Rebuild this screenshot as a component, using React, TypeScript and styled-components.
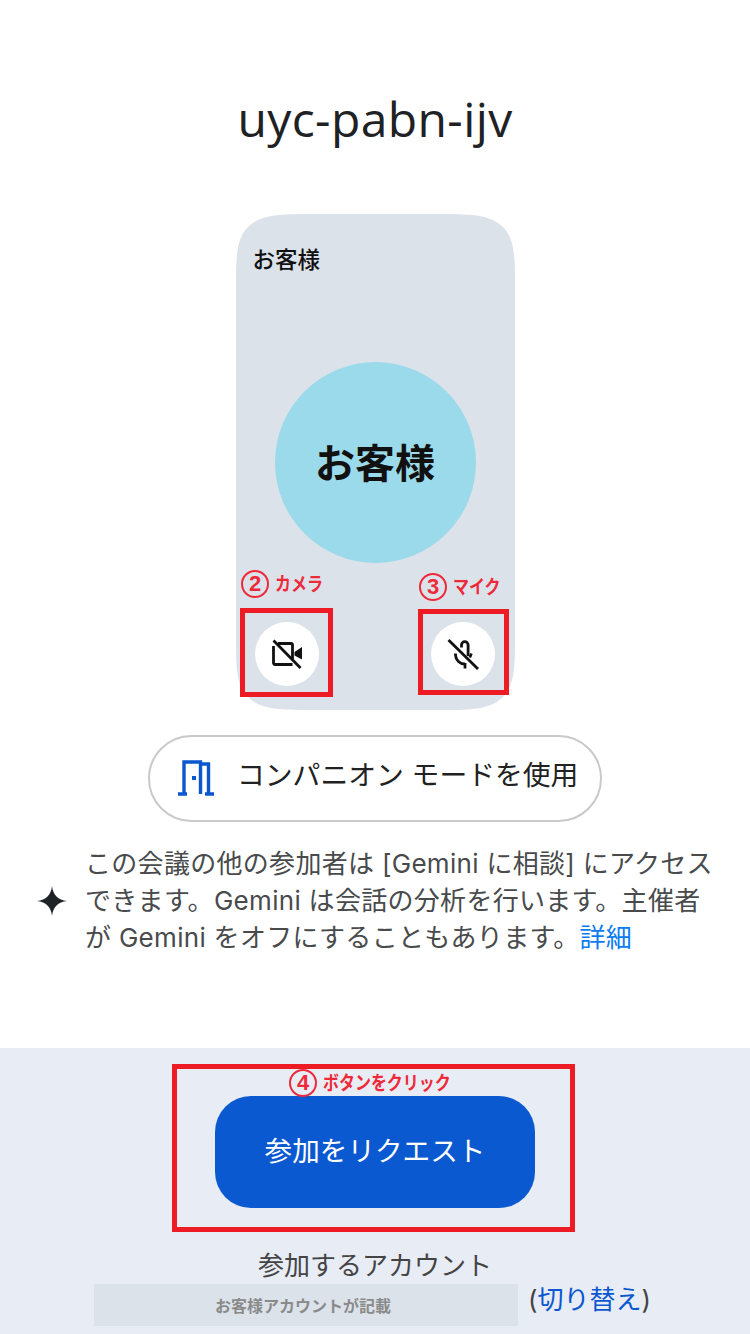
import React from "react";
import styled, { createGlobalStyle } from "styled-components";

const JP = `"Inter", "Noto Sans CJK JP", sans-serif`;

const Global = createGlobalStyle`
  html, body { margin: 0; padding: 0; background: #fff; }
  body { font-family: ${JP}; }
`;

const Page = styled.div`
  position: relative;
  width: 750px;
  height: 1334px;
  overflow: hidden;
  display: flex;
  flex-direction: column;
  align-items: center;
  background: #fff;
`;

const Title = styled.h1`
  margin: 87px 0 0;
  height: 64px;
  font: 400 48px/64px "Open Sans", sans-serif;
  color: #202124;
  letter-spacing: 0.4px;
`;

const Preview = styled.div`
  position: relative;
  margin-top: 63px;
  width: 279px;
  height: 496px;
  box-sizing: border-box;
  padding: 28px 17px 24px;
  border-radius: 50px / 46px;
  background: #dce2ea;
  display: flex;
  flex-direction: column;
  align-items: stretch;

  @supports (corner-shape: squircle) {
    border-radius: 82px / 76px;
    corner-shape: squircle;
  }
`;

const NameLabel = styled.div`
  height: 36px;
  font: 500 22.5px/36px ${JP};
  color: #111;
`;

const Avatar = styled.div`
  align-self: center;
  margin-top: 84px;
  width: 201px;
  height: 201px;
  box-sizing: border-box;
  padding-top: 3px;
  border-radius: 50%;
  background: #9adaeb;
  display: flex;
  align-items: center;
  justify-content: center;
  font: 700 40px/1 ${JP};
  color: #111;
`;

const Controls = styled.div`
  margin-top: 59px;
  padding: 0 3px 0 2px;
  display: flex;
  justify-content: space-between;
`;

const RoundButton = styled.div`
  width: 64px;
  height: 64px;
  border-radius: 50%;
  background: #fff;
  display: flex;
  align-items: center;
  justify-content: center;
`;

const CompanionButton = styled.div`
  margin-top: 25px;
  width: 454px;
  height: 87px;
  box-sizing: border-box;
  border: 2px solid #c9c9c9;
  border-radius: 44px;
  padding: 0 0 5px 28px;
  display: flex;
  align-items: center;
  gap: 23px;
  font: 400 27.8px/1 ${JP};
  color: #222;
  background: #fff;
`;

const DoorSvg = styled.svg`
  margin-top: 4px;
  flex: none;
`;

const Notice = styled.div`
  margin-top: 23px;
  width: 750px;
  box-sizing: border-box;
  padding-left: 36px;
  display: flex;
  align-items: center;
  gap: 17px;
`;

const NoticeText = styled.p`
  margin: 0;
  width: 632px;
  font: 400 26px/37px ${JP};
  letter-spacing: 0.3px;
  color: #484a4c;
`;

const Link = styled.a<{ $strong?: boolean }>`
  color: ${(p) => (p.$strong ? "#0b57d0" : "#0a7cf0")};
`;

const Footer = styled.div`
  position: absolute;
  left: 0;
  right: 0;
  top: 1048px;
  bottom: 0;
  background: #e8ecf5;
  display: flex;
  flex-direction: column;
  align-items: center;
`;

const JoinButton = styled.div`
  margin-top: 48px;
  width: 320px;
  height: 112px;
  border-radius: 36px;
  background: #0b59d1;
  color: #fff;
  display: flex;
  align-items: center;
  justify-content: center;
  box-sizing: border-box;
  font: 400 27.6px/1 ${JP};
`;

const AccountLabel = styled.div`
  margin-top: 41px;
  height: 34px;
  font: 400 26px/34px ${JP};
  color: #444;
`;

const AccountRow = styled.div`
  margin-top: 1px;
  width: 750px;
  box-sizing: border-box;
  padding-left: 94px;
  display: flex;
  align-items: center;
  gap: 10px;
`;

const AccountMask = styled.div`
  width: 424px;
  height: 42px;
  box-sizing: border-box;
  padding: 2px 6px 0 0;
  background: #dce2ea;
  color: #8a8a8a;
  display: flex;
  align-items: center;
  justify-content: center;
  font: 700 16px/1 ${JP};
`;

const Switch = styled.span`
  font: 400 26px/32px ${JP};
  color: #444;
  margin-top: -10px;
`;

const RedBox = styled.div<{ $x: number; $y: number; $w: number; $h: number }>`
  position: absolute;
  left: ${(p) => p.$x}px;
  top: ${(p) => p.$y}px;
  width: ${(p) => p.$w}px;
  height: ${(p) => p.$h}px;
  box-sizing: border-box;
  border: 5px solid #ed1c24;
`;

const Callout = styled.div<{ $x: number; $y: number }>`
  position: absolute;
  left: ${(p) => p.$x}px;
  top: ${(p) => p.$y}px;
  display: flex;
  align-items: center;
  gap: 6px;
  color: #ed2a3a;
  white-space: nowrap;
`;

const CalloutText = styled.span`
  font: 700 19px/1 ${JP};
  transform: scaleX(0.84);
  transform-origin: left center;
`;

const Badge = styled.span`
  width: 28px;
  height: 28px;
  box-sizing: border-box;
  border: 2px solid #ed2a3a;
  border-radius: 50%;
  display: flex;
  align-items: center;
  justify-content: center;
  font: 700 22px/1 "Liberation Sans", sans-serif;
`;

const CameraOffIcon = () => (
  <svg width="32" height="32" viewBox="0 0 32 32" fill="none">
    <path d="M7 5.500h13a1.500 1.500 0 0 1 1.500 1.500v14.500M21.500 26.500H4a1.500 1.500 0 0 1-1.500-1.500V8" stroke="#111" strokeWidth="2.8" />
    <path d="M23.500 14L31 9v12.500L23.500 17.500z" fill="#111" />
    <path d="M2.500 2.500l27 27.500" stroke="#111" strokeWidth="2.8" />
  </svg>
);

const MicOffIcon = () => (
  <svg width="32" height="32" viewBox="0 0 32 32" fill="none">
    <path d="M14.500 9.500V7a3.300 3.300 0 0 1 6.600 0v11" stroke="#111" strokeWidth="2.800" />
    <path d="M8.500 15.500v1.500a9.300 9.300 0 0 0 9.500 9M18 25v5.500" stroke="#111" strokeWidth="2.800" />
    <path d="M24.500 15.500l-1.700 4" stroke="#111" strokeWidth="2.600" />
    <path d="M1.500 2l29.500 29" stroke="#111" strokeWidth="2.800" />
  </svg>
);

const DoorIcon = () => (
  <DoorSvg width="36" height="36" viewBox="0 0 36 36" fill="none">
    <path d="M0 34h9M27 34h9" stroke="#0b57d0" strokeWidth="3.600" />
    <path d="M6 34V2h16.500V34" stroke="#0b57d0" strokeWidth="3.400" />
    <path d="M22 4h8.500V34" stroke="#0b57d0" strokeWidth="3.400" />
    <rect x="14" y="16" width="4" height="4" fill="#0b57d0" />
  </DoorSvg>
);

const SparkIcon = () => (
  <svg width="32" height="32" viewBox="0 0 32 32">
    <path d="M16 1C17 10 22 15 31 16C22 17 17 22 16 31C15 22 10 17 1 16C10 15 15 10 16 1Z" fill="#1f2226" />
  </svg>
);

export default function App() {
  return (
    <Page>
      <Global />
      <Title>uyc-pabn-ijv</Title>
      <Preview>
        <NameLabel>お客様</NameLabel>
        <Avatar>お客様</Avatar>
        <Controls>
          <RoundButton><CameraOffIcon /></RoundButton>
          <RoundButton><MicOffIcon /></RoundButton>
        </Controls>
      </Preview>
      <CompanionButton>
        <DoorIcon />
        <span>コンパニオン モードを使用</span>
      </CompanionButton>
      <Notice>
        <SparkIcon />
        <NoticeText>
          この会議の他の参加者は [Gemini に相談] にアクセスできます。Gemini は会話の分析を行います。主催者が Gemini をオフにすることもあります。<Link>詳細</Link>
        </NoticeText>
      </Notice>
      <Footer>
        <JoinButton>参加をリクエスト</JoinButton>
        <AccountLabel>参加するアカウント</AccountLabel>
        <AccountRow>
          <AccountMask>お客様アカウントが記載</AccountMask>
          <Switch>(<Link $strong>切り替え</Link>)</Switch>
        </AccountRow>
      </Footer>
      <RedBox $x={240} $y={608} $w={93} $h={89} />
      <RedBox $x={418} $y={609} $w={91} $h={86} />
      <RedBox $x={172} $y={1064} $w={403} $h={168} />
      <Callout $x={241} $y={570}><Badge>2</Badge><CalloutText>カメラ</CalloutText></Callout>
      <Callout $x={419} $y={573}><Badge>3</Badge><CalloutText>マイク</CalloutText></Callout>
      <Callout $x={289} $y={1069}><Badge>4</Badge><CalloutText>ボタンをクリック</CalloutText></Callout>
    </Page>
  );
}
